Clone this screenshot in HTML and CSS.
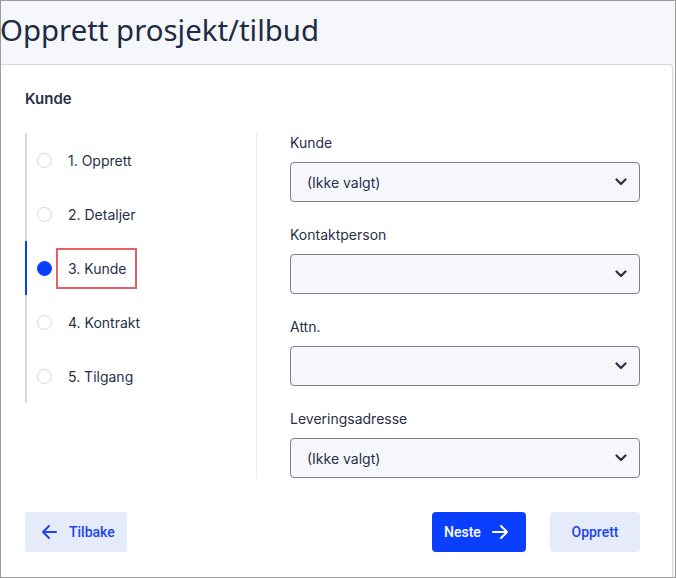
FILE: index.html
```html
<!DOCTYPE html>
<html lang="no">
<head>
  <meta charset="UTF-8" />
  <meta name="viewport" content="width=device-width, initial-scale=1.0" />
  <title>Opprett prosjekt/tilbud</title>
  <link rel="stylesheet" href="styles.css">
</head>
<body>
  <div class="frame">
    <header>
      <h1>Opprett prosjekt/tilbud</h1>
    </header>

    <div class="card">
      <h2>Kunde</h2>

      <div class="wizard">
        <ul class="steps">
          <li><span class="dot"></span><span class="step-label">1. Opprett</span></li>
          <li><span class="dot"></span><span class="step-label">2. Detaljer</span></li>
          <li class="active"><span class="dot"></span><span class="step-label marked">3. Kunde</span></li>
          <li><span class="dot"></span><span class="step-label">4. Kontrakt</span></li>
          <li><span class="dot"></span><span class="step-label">5. Tilgang</span></li>
        </ul>

        <div class="form">
          <div class="field">
            <label>Kunde</label>
            <div class="select">
              <span>(Ikke valgt)</span>
              <svg width="12" height="8" viewBox="0 0 12 8"><path d="M1.5 1.5 6 6 10.5 1.5" fill="none" stroke="#2b3045" stroke-width="2.2" stroke-linecap="round" stroke-linejoin="round"/></svg>
            </div>
          </div>
          <div class="field">
            <label>Kontaktperson</label>
            <div class="select">
              <span></span>
              <svg width="12" height="8" viewBox="0 0 12 8"><path d="M1.5 1.5 6 6 10.5 1.5" fill="none" stroke="#2b3045" stroke-width="2.2" stroke-linecap="round" stroke-linejoin="round"/></svg>
            </div>
          </div>
          <div class="field">
            <label>Attn.</label>
            <div class="select">
              <span></span>
              <svg width="12" height="8" viewBox="0 0 12 8"><path d="M1.5 1.5 6 6 10.5 1.5" fill="none" stroke="#2b3045" stroke-width="2.2" stroke-linecap="round" stroke-linejoin="round"/></svg>
            </div>
          </div>
          <div class="field">
            <label>Leveringsadresse</label>
            <div class="select">
              <span>(Ikke valgt)</span>
              <svg width="12" height="8" viewBox="0 0 12 8"><path d="M1.5 1.5 6 6 10.5 1.5" fill="none" stroke="#2b3045" stroke-width="2.2" stroke-linecap="round" stroke-linejoin="round"/></svg>
            </div>
          </div>
        </div>
      </div>

      <div class="actions">
        <button class="btn light back">
          <svg width="16" height="16" viewBox="0 0 16 16"><path d="M15 8H2M8 2 2 8l6 6" fill="none" stroke="currentColor" stroke-width="2" stroke-linecap="round" stroke-linejoin="round"/></svg>
          Tilbake
        </button>
        <span class="spacer"></span>
        <button class="btn primary next">
          Neste
          <svg width="17" height="16" viewBox="0 0 17 16"><path d="M1 8h14M9 2l6 6-6 6" fill="none" stroke="currentColor" stroke-width="2" stroke-linecap="round" stroke-linejoin="round"/></svg>
        </button>
        <button class="btn light create">Opprett</button>
      </div>
    </div>
  </div>
</body>
</html>
```

FILE: styles.css
```css
* {
  box-sizing: border-box;
}
body {
  margin: 0;
  font-family: 'Inter', 'Noto Sans', sans-serif;
  color: #283148;
}
.frame {
  width: 676px;
  height: 578px;
  border: 1px solid #9c9c9c;
  background: #f5f7fb;
  display: flex;
  flex-direction: column;
}
header {
  height: 63px;
  padding-bottom: 6px;
  display: flex;
  align-items: center;
}
h1 {
  margin: 0 0 0 -1px;
  font-family: 'Noto Sans', sans-serif;
  font-weight: 400;
  font-size: 29.4px;
  color: #1f2a44;
}
.card {
  flex: 1;
  margin-right: 2px;
  background: white;
  border-top: 1px solid #d3d7de;
  border-right: 1px solid #d3d7de;
  border-top-right-radius: 4px;
  padding: 0 32px 0 24px;
  display: flex;
  flex-direction: column;
}
h2 {
  margin: 0;
  height: 68px;
  padding-top: 25px;
  font-size: 15px;
  line-height: 18px;
  font-weight: 600;
  color: #283148;
}
.wizard {
  display: flex;
  align-items: flex-start;
}
.steps {
  list-style: none;
  margin: 0;
  padding: 0;
  width: 231px;
  border-left: 2px solid #d9d9d9;
}
.steps li {
  height: 54px;
  display: flex;
  align-items: center;
  padding-left: 10px;
  gap: 16px;
  font-size: 14px;
}
.steps li.active {
  margin-left: -2px;
  border-left: 2px solid #0a3fff;
}
.dot {
  width: 15px;
  height: 15px;
  border-radius: 50%;
  border: 1px solid #d6d6d6;
  background: white;
}
.active .dot {
  background: #0a3fff;
  border-color: #0a3fff;
}
.step-label {
  position: relative;
}
.marked::after {
  content: "";
  position: absolute;
  left: -12px;
  right: -10px;
  top: -12px;
  bottom: -12px;
  border: 2px solid #e6616c;
}
.form {
  flex: 1;
  border-left: 1px solid #ebebeb;
  padding-left: 33px;
  display: flex;
  flex-direction: column;
  gap: 23px;
}
.field label {
  display: block;
  font-size: 14px;
  line-height: 20px;
  margin-bottom: 9px;
  color: #2a3045;
}
.select {
  height: 40px;
  border: 1px solid #7d8191;
  border-radius: 4px;
  background: #f6f7fb;
  padding: 0 12px 0 16px;
  display: flex;
  align-items: center;
  justify-content: space-between;
  font-size: 14px;
  color: #283148;
}
.actions {
  display: flex;
  margin-top: 34px;
  gap: 24px;
}
.spacer {
  flex: 1;
}
.btn {
  height: 40px;
  border: none;
  border-radius: 4px;
  font-family: 'Roboto', sans-serif;
  font-weight: 500;
  font-size: 14px;
  display: flex;
  align-items: center;
  cursor: pointer;
}
.btn.light {
  background: #e6ebfc;
  color: #1c45ea;
}
.btn.primary {
  background: #0a3fff;
  color: white;
}
.back {
  width: 102px;
  padding: 0 0 0 16px;
  gap: 12px;
}
.next {
  width: 94px;
  padding: 0 0 0 12px;
  gap: 11px;
}
.create {
  width: 90px;
  justify-content: center;
}
```
